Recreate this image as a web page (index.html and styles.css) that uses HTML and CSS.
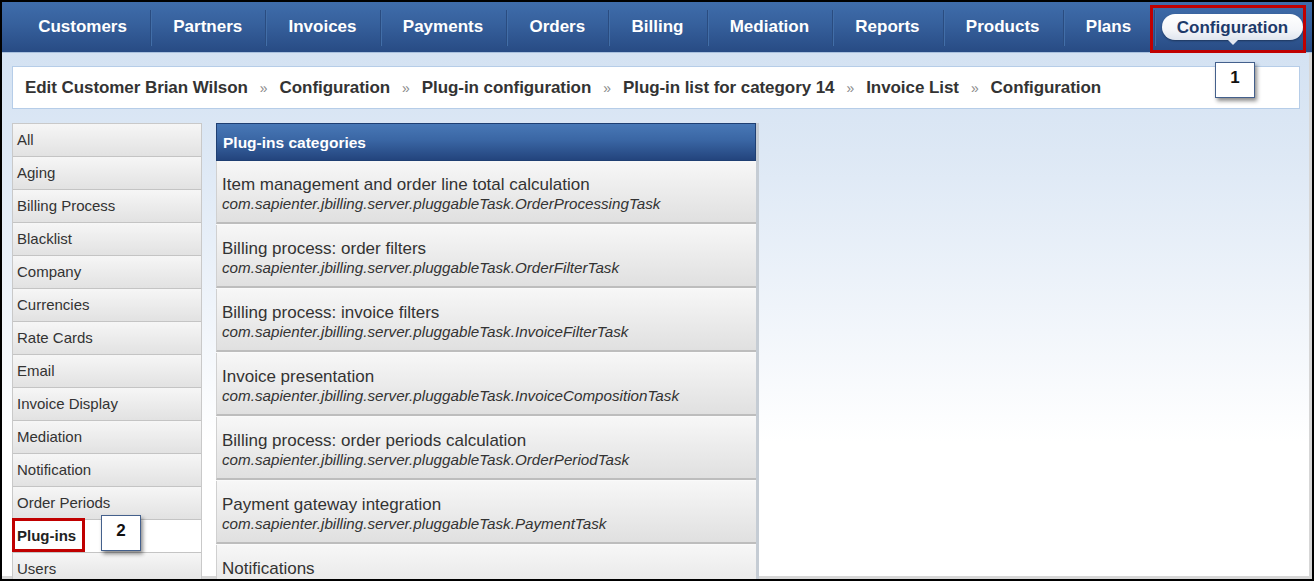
FILE: index.html
```html
<!DOCTYPE html>
<html>
<head>
<meta charset="utf-8">
<link rel="stylesheet" href="styles.css">
</head>
<body>
<div class="frame">
  <nav class="topnav">
    <a class="nav-item">Customers</a>
    <a class="nav-item">Partners</a>
    <a class="nav-item">Invoices</a>
    <a class="nav-item">Payments</a>
    <a class="nav-item">Orders</a>
    <a class="nav-item">Billing</a>
    <a class="nav-item">Mediation</a>
    <a class="nav-item">Reports</a>
    <a class="nav-item">Products</a>
    <a class="nav-item">Plans</a>
    <a class="nav-item nav-active"><span class="pill">Configuration</span><span class="hl hl-nav"></span></a>
  </nav>

  <div class="crumbs">
    <span class="crumb">Edit Customer Brian Wilson</span><span class="sep">»</span>
    <span class="crumb">Configuration</span><span class="sep">»</span>
    <span class="crumb">Plug-in configuration</span><span class="sep">»</span>
    <span class="crumb">Plug-in list for category 14</span><span class="sep">»</span>
    <span class="crumb">Invoice List</span><span class="sep">»</span>
    <span class="crumb">Configuration</span>
  </div>

  <div class="content">
    <ul class="side">
      <li>All</li>
      <li>Aging</li>
      <li>Billing Process</li>
      <li>Blacklist</li>
      <li>Company</li>
      <li>Currencies</li>
      <li>Rate Cards</li>
      <li>Email</li>
      <li>Invoice Display</li>
      <li>Mediation</li>
      <li>Notification</li>
      <li>Order Periods</li>
      <li class="sel"><span class="sel-label">Plug-ins<span class="hl hl-side"></span></span></li>
      <li>Users</li>
    </ul>

    <div class="panel">
      <div class="panel-head">Plug-ins categories</div>
      <div class="row"><div class="r-title">Item management and order line total calculation</div><div class="r-cls">com.sapienter.jbilling.server.pluggableTask.OrderProcessingTask</div></div>
      <div class="row"><div class="r-title">Billing process: order filters</div><div class="r-cls">com.sapienter.jbilling.server.pluggableTask.OrderFilterTask</div></div>
      <div class="row"><div class="r-title">Billing process: invoice filters</div><div class="r-cls">com.sapienter.jbilling.server.pluggableTask.InvoiceFilterTask</div></div>
      <div class="row"><div class="r-title">Invoice presentation</div><div class="r-cls">com.sapienter.jbilling.server.pluggableTask.InvoiceCompositionTask</div></div>
      <div class="row"><div class="r-title">Billing process: order periods calculation</div><div class="r-cls">com.sapienter.jbilling.server.pluggableTask.OrderPeriodTask</div></div>
      <div class="row"><div class="r-title">Payment gateway integration</div><div class="r-cls">com.sapienter.jbilling.server.pluggableTask.PaymentTask</div></div>
      <div class="row"><div class="r-title">Notifications</div></div>
    </div>
  </div>

  <div class="callout callout-1">1</div>
  <div class="callout callout-2">2</div>
</div>
</body>
</html>
```

FILE: styles.css
```css
html, body {
  margin: 0;
  padding: 0;
  background: #000;
}

.frame {
  position: relative;
  width: 1314px;
  height: 581px;
  box-sizing: border-box;
  border: 2px solid #000;
  overflow: hidden;
  font-family: "Liberation Sans", Arial, sans-serif;
  color: #333;
  background: linear-gradient(to bottom, #cfdff1 0px, #dde8f5 150px, #f2f6fb 330px, #ffffff 440px);
  box-shadow: inset -3px -3px 0 #d7d7d7;
}

/* ---------- top navigation ---------- */
.topnav {
  display: flex;
  align-items: center;
  height: 51px;
  padding-left: 13px;
  background: linear-gradient(to bottom, #3f6dab 0%, #36609c 45%, #284b84 100%);
  border-bottom: 1px solid #a9c1de;
  box-sizing: border-box;
}

.nav-item {
  position: relative;
  padding: 0 23.15px;
  color: #fff;
  font-weight: bold;
  font-size: 17px;
  line-height: 26px;
}

.nav-item + .nav-item::before {
  content: "";
  position: absolute;
  left: 0;
  top: -4px;
  bottom: -6px;
  width: 1px;
  background: #2a4c80;
  box-shadow: 1px 0 0 #426ea8;
}

.nav-active {
  padding: 0 0 0 8px;
}

.pill {
  position: relative;
  display: block;
  padding: 0 14.5px;
  height: 26px;
  line-height: 27px;
  border-radius: 13px;
  color: #1d3a6a;
  background: linear-gradient(to bottom, #ffffff 0%, #f4f6f9 60%, #dfe5ee 100%);
  box-shadow: 0 1px 2px rgba(0, 0, 0, 0.35);
}

.pill::after {
  content: "";
  position: absolute;
  left: 50%;
  bottom: -5px;
  margin-left: -5px;
  border-left: 5px solid transparent;
  border-right: 5px solid transparent;
  border-top: 5px solid #e3e8f0;
}

/* red highlight boxes */
.hl {
  position: absolute;
  border: 3px solid #c00000;
  box-sizing: border-box;
  pointer-events: none;
}

.hl-nav {
  left: -4px;
  right: -3px;
  top: -9px;
  bottom: -13px;
}

/* ---------- breadcrumbs ---------- */
.crumbs {
  display: flex;
  align-items: center;
  margin: 13px 12px 0 10px;
  height: 43px;
  box-sizing: border-box;
  padding-left: 12px;
  background: #fff;
  border: 1px solid #b6cde8;
  font-weight: bold;
  font-size: 17px;
  letter-spacing: -0.07px;
  color: #333;
}

.sep {
  padding: 0 12px;
  font-size: 14px;
  font-weight: normal;
  color: #8a8a8a;
}

/* ---------- content ---------- */
.content {
  display: flex;
  align-items: flex-start;
  margin: 14px 0 0 10px;
  gap: 14px;
}

.side {
  list-style: none;
  margin: 0;
  padding: 0;
  width: 190px;
  border: 1px solid #c9c9c9;
  border-bottom: none;
  box-sizing: border-box;
}

.side li {
  height: 32px;
  line-height: 32px;
  padding-left: 4px;
  font-size: 15px;
  color: #333;
  background: linear-gradient(to bottom, #f6f6f6 0%, #e2e2e2 100%);
  border-bottom: 1px solid #c4c4c4;
}

.side li.sel {
  background: #fff;
  font-weight: bold;
  color: #222;
}

.sel-label {
  position: relative;
}

.hl-side {
  left: -5px;
  right: -9px;
  top: -9px;
  bottom: -8px;
}

.panel {
  width: 543px;
  border-right: 3px solid #c5ccd4;
  box-sizing: border-box;
}

.panel-head {
  height: 38px;
  line-height: 38px;
  padding-left: 6px;
  color: #fff;
  font-weight: bold;
  font-size: 15.5px;
  background: linear-gradient(to bottom, #4878b6 0%, #3a66a4 45%, #23447d 100%);
  border: 1px solid #1f3f72;
  box-sizing: border-box;
}

.row {
  height: 63px;
  box-sizing: border-box;
  padding: 14px 0 0 5px;
  background: linear-gradient(to bottom, #f7f7f7 0%, #e0e0e0 100%);
  border-bottom: 2px solid #bdbdbd;
  border-left: 1px solid #d0d0d0;
  margin-bottom: 1px;
  box-shadow: 0 1px 0 #fafafa;
}

.r-title {
  font-size: 17px;
  line-height: 20px;
  color: #333;
}

.r-cls {
  font-size: 15.2px;
  line-height: 17px;
  font-style: italic;
  color: #333;
}

/* ---------- callouts ---------- */
.callout {
  position: absolute;
  width: 40px;
  height: 36px;
  box-sizing: border-box;
  background: #fff;
  border: 1px solid #44608c;
  box-shadow: 2px 3px 4px rgba(0, 0, 0, 0.45);
  font-weight: bold;
  font-size: 17px;
  color: #111;
  text-align: center;
  line-height: 30px;
}

.callout-1 {
  left: 1213px;
  top: 60px;
}

.callout-2 {
  left: 99px;
  top: 513px;
}
```
